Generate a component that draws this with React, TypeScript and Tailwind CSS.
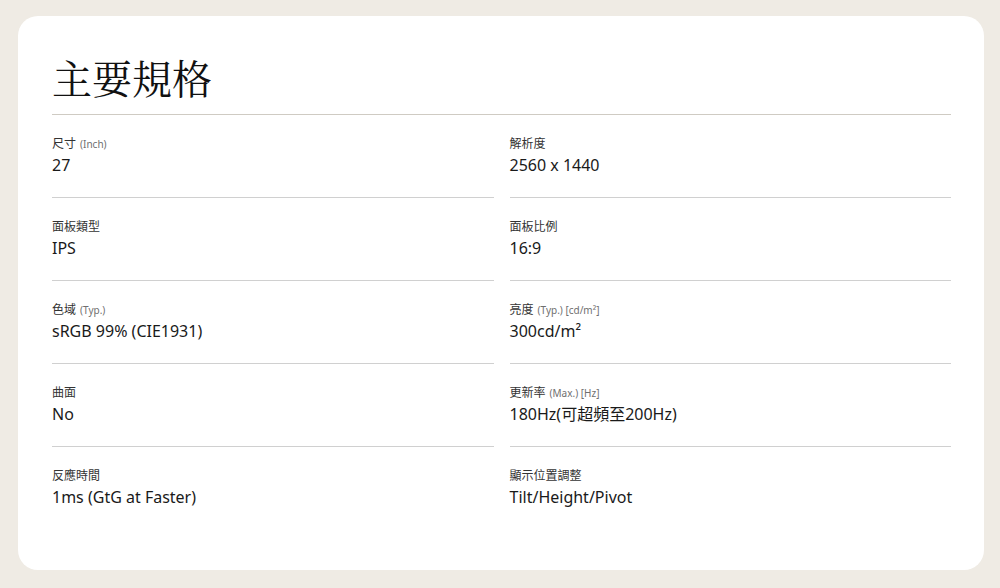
import React from "react";

const specs = [
  { label: "尺寸", note: "(Inch)", value: "27" },
  { label: "解析度", note: "", value: "2560 x 1440" },
  { label: "面板類型", note: "", value: "IPS" },
  { label: "面板比例", note: "", value: "16:9" },
  { label: "色域", note: "(Typ.)", value: "sRGB 99% (CIE1931)" },
  { label: "亮度", note: "(Typ.) [cd/m²]", value: "300cd/m²" },
  { label: "曲面", note: "", value: "No" },
  { label: "更新率", note: "(Max.) [Hz]", value: "180Hz(可超頻至200Hz)" },
  { label: "反應時間", note: "", value: "1ms (GtG at Faster)" },
  { label: "顯示位置調整", note: "", value: "Tilt/Height/Pivot" },
];

export default function App() {
  return (
    <div className="min-h-[588px] bg-[#efebe4] pt-4 pl-[18px] pr-4 pb-[18px] font-['Noto_Sans','Noto_Sans_CJK_TC',sans-serif]">
      <div className="h-[554px] rounded-[20px] bg-white pl-[34px] pr-[33px] pt-[36px]">
        <h2 className="font-['Noto_Serif_CJK_TC','Liberation_Serif','Noto_Sans_CJK_TC',serif] text-[40px] leading-[50px] text-[#111] border-b border-[#cfcbc3] pb-[12px]">
          主要規格
        </h2>
        <ul className="grid grid-cols-2 gap-x-4">
          {specs.map((s) => (
            <li
              key={s.label}
              className="border-b border-[#d0d0d0] pt-[20px] pb-[20px] last:border-b-0 [&:nth-last-child(2)]:border-b-0"
            >
              <div className="text-[12px] leading-[18px] text-[#333]">
                {s.label}
                {s.note && (
                  <span className="ml-1 text-[10px] text-[#6f6f6f]">{s.note}</span>
                )}
              </div>
              <div className="text-[16px] leading-[24px] text-[#1a1a1a]">{s.value}</div>
            </li>
          ))}
        </ul>
      </div>
    </div>
  );
}
